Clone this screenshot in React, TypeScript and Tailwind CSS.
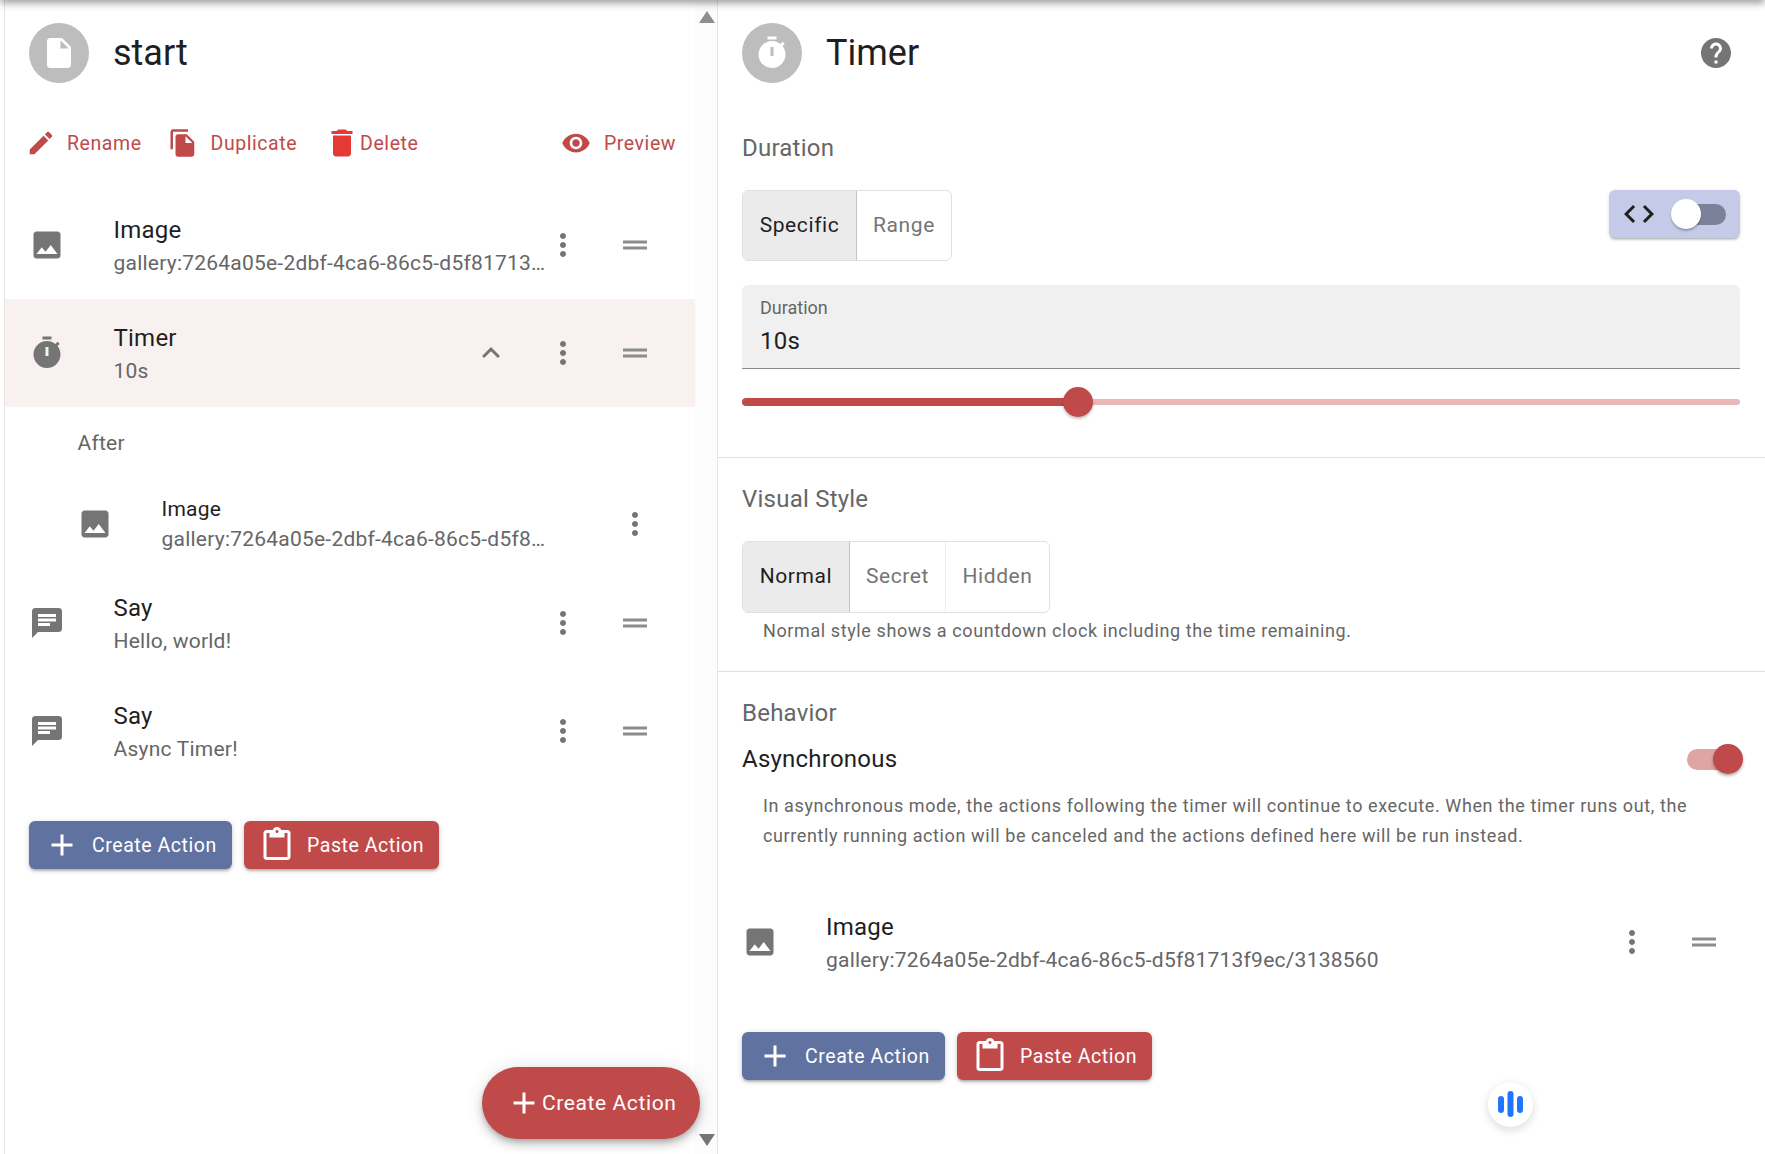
const P = {
  file: 'M6 2c-1.1 0-1.99.9-1.99 2L4 20c0 1.1.89 2 1.99 2H18c1.1 0 2-.9 2-2V8l-6-6H6zm7 7V3.5L18.5 9H13z',
  timer: 'M15 1H9v2h6V1zm-4 13h2V8h-2v6zm8.03-6.61l1.42-1.42c-.43-.51-.9-.99-1.41-1.41l-1.42 1.42C16.07 4.74 14.12 4 12 4c-4.97 0-9 4.03-9 9s4.02 9 9 9 9-4.03 9-9c0-2.12-.74-4.07-1.97-5.61z',
  edit: 'M3 17.25V21h3.75L17.81 9.94l-3.75-3.75L3 17.25zM20.71 7.04c.39-.39.39-1.02 0-1.41l-2.34-2.34c-.39-.39-1.02-.39-1.41 0l-1.83 1.83 3.75 3.75 1.83-1.83z',
  copy: 'M16 1H4c-1.1 0-2 .9-2 2v14h2V3h12V1zm-1 4l6 6v10c0 1.1-.9 2-2 2H7.99C6.89 23 6 22.1 6 21l.01-14c0-1.1.89-2 1.99-2h7zm-1 7h5.5L14 6.5V12z',
  trash: 'M6 19c0 1.1.9 2 2 2h8c1.1 0 2-.9 2-2V7H6v12zM19 4h-3.5l-1-1h-5l-1 1H5v2h14V4z',
  eye: 'M12 4.5C7 4.5 2.73 7.61 1 12c1.73 4.39 6 7.5 11 7.5s9.27-3.11 11-7.5c-1.73-4.39-6-7.5-11-7.5zM12 17c-2.76 0-5-2.24-5-5s2.24-5 5-5 5 2.24 5 5-2.24 5-5 5zm0-8c-1.66 0-3 1.34-3 3s1.34 3 3 3 3-1.34 3-3-1.34-3-3-3z',
  image: 'M21 19V5c0-1.1-.9-2-2-2H5c-1.1 0-2 .9-2 2v14c0 1.1.9 2 2 2h14c1.1 0 2-.9 2-2zM8.5 13.5l2.5 3.01L14.5 12l4.5 6H5l3.5-4.5z',
  more: 'M12 8c1.1 0 2-.9 2-2s-.9-2-2-2-2 .9-2 2 .9 2 2 2zm0 2c-1.1 0-2 .9-2 2s.9 2 2 2 2-.9 2-2-.9-2-2-2zm0 6c-1.1 0-2 .9-2 2s.9 2 2 2 2-.9 2-2-.9-2-2-2z',
  drag: 'M20 9H4v2h16V9zM4 15h16v-2H4v2z',
  less: 'M12 8l-6 6 1.41 1.41L12 10.83l4.59 4.58L18 14z',
  chat: 'M20 2H4c-1.1 0-1.99.9-1.99 2L2 22l4-4h14c1.1 0 2-.9 2-2V4c0-1.1-.9-2-2-2zM6 9h12v2H6V9zm8 5H6v-2h8v2zm4-6H6V6h12v2z',
  add: 'M19 13h-6v6h-2v-6H5v-2h6V5h2v6h6v2z',
  paste: 'M19 2h-4.18C14.4.84 13.3 0 12 0c-1.3 0-2.4.84-2.82 2H5c-1.1 0-2 .9-2 2v16c0 1.1.9 2 2 2h14c1.1 0 2-.9 2-2V4c0-1.1-.9-2-2-2zm-7 0c.55 0 1 .45 1 1s-.45 1-1 1-1-.45-1-1 .45-1 1-1zm7 18H5V4h2v3h10V4h2v16z',
  help: 'M12 2C6.48 2 2 6.48 2 12s4.48 10 10 10 10-4.48 10-10S17.52 2 12 2zm1 17h-2v-2h2v2zm2.07-7.75l-.9.92C13.45 12.9 13 13.5 13 15h-2v-.5c0-1.1.45-2.1 1.17-2.83l1.24-1.26c.37-.36.59-.86.59-1.41 0-1.1-.9-2-2-2s-2 .9-2 2H8c0-2.21 1.79-4 4-4s4 1.79 4 4c0 .88-.36 1.68-.93 2.25z',
  code: 'M9.4 16.6L4.8 12l4.6-4.6L8 6l-6 6 6 6 1.4-1.4zm5.2 0l4.6-4.6-4.6-4.6L16 6l6 6-6 6-1.4-1.4z',
};

const GALLERY = 'gallery:7264a05e-2dbf-4ca6-86c5-d5f81713f9ec/3138560';

const Icon = ({ d, className = 'w-9 h-9 text-[#757575]' }: { d: string; className?: string }) => (
  <svg viewBox="0 0 24 24" fill="currentColor" fillRule="evenodd" className={`shrink-0 ${className}`}>
    <path d={d} />
  </svg>
);

const Heading = ({ icon, title }: { icon: string; title: string }) => (
  <div className="flex items-center h-[60px]">
    <div className="w-[60px] h-[60px] rounded-full bg-[#bdbdbd] flex items-center justify-center">
      <Icon d={icon} className="w-9 h-9 text-white" />
    </div>
    <h1 className="ml-6 text-[36px] leading-[60px] text-[#1f1f1f]">{title}</h1>
  </div>
);

const ActionLink = ({ d, label, iconClass, className = '' }: { d: string; label: string; iconClass: string; className?: string }) => (
  <div className={`flex items-center ${className}`}>
    <Icon d={d} className={iconClass} />
    <span className="pt-[2px] text-[19.5px] tracking-[0.56px] text-[#c04a4a]">{label}</span>
  </div>
);

const Row = ({ icon, title, sub, active, chevron }: { icon: string; title: string; sub: string; active?: boolean; chevron?: boolean }) => (
  <div className={`flex items-center h-[108px] pl-6 pr-[42px] ${active ? 'bg-[#f9f1f0]' : ''}`}>
    <div className="w-[84.5px] shrink-0">
      <Icon d={icon} />
    </div>
    <div className="flex-1 min-w-0 pt-[2px] -mr-[1px]">
      <div className="text-[24px] leading-[36px] tracking-[0.225px] text-[#1f1f1f]">{title}</div>
      <div className="text-[21px] leading-[31.5px] tracking-[0.225px] text-[#666666] truncate">{sub}</div>
    </div>
    <div className="flex items-center gap-9">
      {chevron && <Icon d={P.less} />}
      <Icon d={P.more} />
      <Icon d={P.drag} className="w-9 h-9 text-[#8c8c8c]" />
    </div>
  </div>
);

const ActionButtons = () => (
  <div className="flex gap-3 h-12">
    <button className="h-12 w-[203px] rounded-[6px] bg-[#6072a0] text-white flex items-center pl-[15px] shadow-[0_3px_3px_-2px_rgba(0,0,0,.2),0_2px_3px_rgba(0,0,0,.14),0_1px_7px_rgba(0,0,0,.12)]">
      <Icon d={P.add} className="w-9 h-9 text-white" />
      <span className="ml-3 pt-[2px] text-[19.5px] tracking-[0.56px]">Create Action</span>
    </button>
    <button className="h-12 w-[195px] rounded-[6px] bg-[#c04a4a] text-white flex items-center pl-[15px] shadow-[0_3px_3px_-2px_rgba(0,0,0,.2),0_2px_3px_rgba(0,0,0,.14),0_1px_7px_rgba(0,0,0,.12)]">
      <Icon d={P.paste} className="w-9 h-9 text-white" />
      <span className="ml-3 pt-[2px] text-[19.5px] tracking-[0.56px]">Paste Action</span>
    </button>
  </div>
);

const Toggle = ({ options }: { options: { label: string; w: string }[] }) => (
  <div className="flex h-full w-fit rounded-[6px] border border-[#e0e0e0]">
    {options.map((o, i) => (
      <div
        key={o.label}
        className={`${o.w} flex items-center justify-center text-[21px] tracking-[0.6px] ${i === 0 ? 'bg-[#ebebeb] text-[#1f1f1f] rounded-l-[5px] border-r border-[#c4c4c4]' : 'text-[#757575]'} ${i === 1 && options.length > 2 ? 'border-r border-[#eeeeee]' : ''}`}
      >
        {o.label}
      </div>
    ))}
  </div>
);

const SectionLabel = ({ children }: { children: string }) => (
  <div className="h-8 text-[24px] leading-8 tracking-[0.225px] text-[#666666]">{children}</div>
);

export default function App() {
  return (
    <div className="relative flex w-[1765px] h-[1154px] overflow-hidden bg-white font-['Roboto',sans-serif]">
      <div className="absolute z-10 inset-x-0 -top-2 h-2 shadow-[0_2px_8px_rgba(0,0,0,.5)]" />

      {/* Left panel */}
      <div className="relative flex w-[714px] ml-1 border-l border-r border-[#e6e6e6] shrink-0">
        <div className="w-[690px] shrink-0 pt-[23px]">
          <div className="pl-6">
            <Heading icon={P.file} title="start" />
          </div>
          <div className="relative flex items-center h-9 mt-[42px] pl-[21px]">
            <ActionLink d={P.edit} label="Rename" iconClass="w-[30px] h-[30px] text-[#c04a4a] mr-[11px]" />
            <ActionLink d={P.copy} label="Duplicate" iconClass="w-[30px] h-[30px] text-[#c04a4a] mr-[13px]" className="ml-[26px]" />
            <ActionLink d={P.trash} label="Delete" iconClass="w-9 h-9 text-[#e53935]" className="ml-[27px]" />
            <ActionLink d={P.eye} label="Preview" iconClass="w-[30px] h-[30px] text-[#c04a4a] mr-[13px]" className="ml-auto mr-[19px]" />
          </div>
          <div className="mt-[30px]">
            <Row icon={P.image} title="Image" sub={GALLERY} />
            <Row icon={P.timer} title="Timer" sub="10s" active chevron />
            <div className="h-[72px] flex items-center pl-[72.5px] pt-[2px] text-[21px] tracking-[0.225px] text-[#666666]">After</div>
            <div className="flex items-center h-[90px] pl-[72px] pr-[42px]">
              <div className="w-[84.5px] shrink-0">
                <Icon d={P.image} />
              </div>
              <div className="flex-1 min-w-0 mr-[71px] pt-[1px]">
                <div className="text-[21px] leading-[28px] tracking-[0.225px] text-[#1f1f1f]">Image</div>
                <div className="pt-[1px] text-[21px] leading-[31px] tracking-[0.225px] text-[#666666] truncate">{GALLERY}</div>
              </div>
              <Icon d={P.more} />
            </div>
            <Row icon={P.chat} title="Say" sub="Hello, world!" />
            <Row icon={P.chat} title="Say" sub="Async Timer!" />
          </div>
          <div className="mt-9 pl-6">
            <ActionButtons />
          </div>
        </div>

        {/* Scrollbar */}
        <div className="flex-1 flex flex-col items-center justify-between pt-[11px] pb-2 bg-[#fcfcfc]">
          <div className="w-0 h-0 ml-[2px] border-x-[8px] border-x-transparent border-b-[12px] border-b-[#8e8e8e]" />
          <div className="w-0 h-0 ml-[2px] border-x-[8px] border-x-transparent border-t-[12px] border-t-[#757575]" />
        </div>

        <button className="absolute left-[477px] top-[1067px] h-[72px] w-[218px] rounded-full bg-[#c04a4a] text-white flex items-center pl-[24px] shadow-[0_3px_5px_-1px_rgba(0,0,0,.2),0_6px_10px_rgba(0,0,0,.14),0_1px_18px_rgba(0,0,0,.12)]">
          <Icon d={P.add} className="w-9 h-9 text-white" />
          <span className="pt-[2px] text-[21px] tracking-[0.6px]">Create Action</span>
        </button>
      </div>

      {/* Right panel */}
      <div className="relative flex-1 pt-[23px]">
        <div className="flex items-center justify-between pl-6 pr-[31px]">
          <Heading icon={P.timer} title="Timer" />
          <Icon d={P.help} />
        </div>

        <div className="pl-6 pr-[25px]">
          <div className="mt-[49px]">
            <SectionLabel>Duration</SectionLabel>
          </div>
          <div className="mt-[26px] h-[71px] flex items-start justify-between">
            <Toggle options={[{ label: 'Specific', w: 'w-[114px]' }, { label: 'Range', w: 'w-[94px]' }]} />
            <div className="w-[131px] h-12 rounded-[6px] bg-[#c5cae9] flex items-center pl-[12px] shadow-[0_3px_3px_-2px_rgba(0,0,0,.3),0_1px_4px_rgba(0,0,0,.12)]">
              <Icon d={P.code} className="w-9 h-9 text-[#1f1f1f]" />
              <div className="relative ml-[14px] w-[60px] h-[21px]">
                <div className="absolute left-[14px] right-[5px] inset-y-0 rounded-full bg-[#7c8199]" />
                <div className="absolute left-0 -top-[5px] w-[30px] h-[30px] rounded-full bg-white shadow-[0_2px_2px_rgba(0,0,0,.25)]" />
              </div>
            </div>
          </div>
          <div className="mt-6 h-[84px] bg-[#f0f0f0] rounded-t-[6px] border-b border-[#8a8a8a] px-[18px] pt-[11px]">
            <div className="text-[18px] leading-6 text-[#666666]">Duration</div>
            <div className="mt-[7px] text-[24px] leading-7 tracking-[0.225px] text-[#1f1f1f]">10s</div>
          </div>
          <div className="relative mt-[18px] h-[30px] flex items-center">
            <div className="h-[8px] w-[336px] bg-[#c04a4a] rounded-l-full" />
            <div className="h-[6px] flex-1 bg-[#e8b8b8] rounded-r-full" />
            <div className="absolute left-[321px] top-0 w-[30px] h-[30px] rounded-full bg-[#c04a4a] shadow-[0_2px_3px_rgba(0,0,0,.25)]" />
          </div>
        </div>

        <div className="mt-[40px] border-t border-[#e0e0e0]" />

        <div className="pl-6 pr-[25px]">
          <div className="mt-[25px]">
            <SectionLabel>Visual Style</SectionLabel>
          </div>
          <div className="mt-[26px] h-[72px]">
            <Toggle options={[{ label: 'Normal', w: 'w-[107px]' }, { label: 'Secret', w: 'w-[96px]' }, { label: 'Hidden', w: 'w-[103px]' }]} />
          </div>
          <div className="mt-[6px] pl-[21px] h-6 text-[18px] leading-6 tracking-[0.6px] text-[#666666]">
            Normal style shows a countdown clock including the time remaining.
          </div>
        </div>

        <div className="mt-[28px] border-t border-[#e0e0e0]" />

        <div className="pl-6 pr-[25px]">
          <div className="mt-[25px]">
            <SectionLabel>Behavior</SectionLabel>
          </div>
          <div className="mt-[12px] h-9 flex items-center justify-between">
            <span className="text-[24px] tracking-[0.225px] text-[#1f1f1f]">Asynchronous</span>
            <div className="relative w-[53px] h-[21px]">
              <div className="absolute inset-y-0 left-0 right-[6px] rounded-full bg-[#dfa4a4]" />
              <div className="absolute right-[-3px] -top-[5px] w-[30px] h-[30px] rounded-full bg-[#c04a4a] shadow-[0_2px_3px_rgba(0,0,0,.3)]" />
            </div>
          </div>
          <p className="mt-[14px] pl-[21px] pr-[30px] text-[18px] leading-[30px] tracking-[0.6px] text-[#666666]">
            In asynchronous mode, the actions following the timer will continue to execute. When the timer runs out, the currently running action will be canceled and the actions defined here will be run instead.
          </p>
          <div className="mt-[37px] flex items-center h-[108px] pr-[18px]">
            <div className="w-[84px] shrink-0">
              <Icon d={P.image} />
            </div>
            <div className="flex-1 min-w-0 pt-[2px]">
              <div className="text-[24px] leading-[36px] tracking-[0.225px] text-[#1f1f1f]">Image</div>
              <div className="text-[21px] leading-[31.5px] tracking-[0.225px] text-[#666666] truncate">{GALLERY}</div>
            </div>
            <div className="flex items-center gap-9">
              <Icon d={P.more} />
              <Icon d={P.drag} className="w-9 h-9 text-[#8c8c8c]" />
            </div>
          </div>
          <div className="mt-9">
            <ActionButtons />
          </div>
        </div>

        <div className="absolute left-[770px] top-[1081.5px] w-[45px] h-[45px] rounded-full bg-white flex items-center justify-center shadow-[0_3px_10px_rgba(0,0,0,.15)]">
          <svg viewBox="0 0 25 26" className="w-[25px] h-[26px]" fill="#2176ff">
            <rect x="0" y="5" width="6" height="17" rx="3" />
            <rect x="9.5" y="0" width="6" height="26" rx="3" />
            <rect x="19" y="5" width="6" height="17" rx="3" />
          </svg>
        </div>
      </div>
    </div>
  );
}
